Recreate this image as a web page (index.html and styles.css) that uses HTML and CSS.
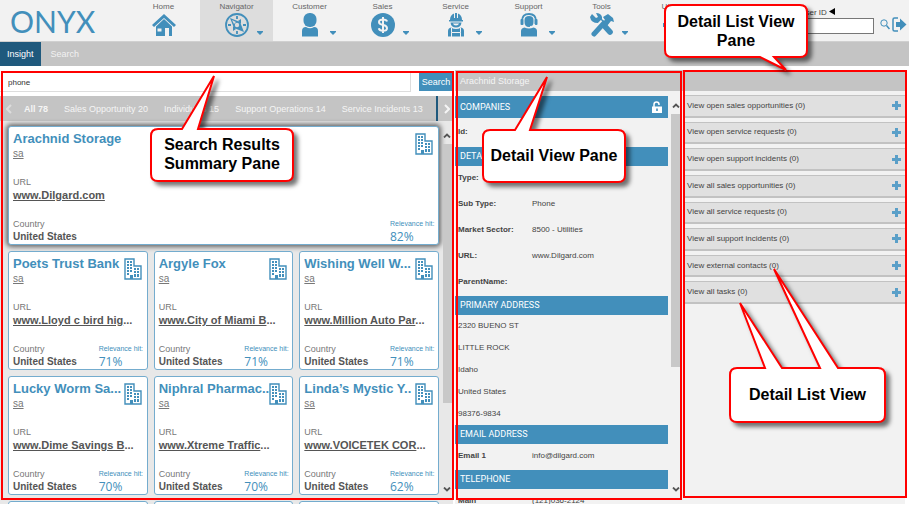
FILE: index.html
```html
<!DOCTYPE html>
<html lang="en">
<head>
<meta charset="utf-8">
<title>Onyx Navigator</title>
<link rel="stylesheet" href="styles.css">
</head>
<body>
<svg class="defs" aria-hidden="true">
  <symbol id="building" viewBox="0 0 18 22">
    <path d="M1 21V1h9v7h7v13Z" fill="#fff" stroke="currentColor" stroke-width="1.4"/>
    <path d="M3 3h2v2H3zm3 0h2v2H6zM3 6h2v2H3zm3 0h2v2H6zM3 9h2v2H3zm3 0h2v2H6zM3 12h2v2H3zm3 0h2v2H6zM10 10h2v2h-2zm3 0h2v2h-2zm-3 3h2v2h-2zm3 0h2v2h-2zM3 15h2v2H3zM6 17h3v4H6zM10 16h2v3h-2zm3 0h2v3h-2z" fill="currentColor"/>
  </symbol>
  <symbol id="caret" viewBox="0 0 6 4"><path d="M0 0h6v1L3 4 0 1Z" fill="currentColor"/></symbol>
  <symbol id="plus" viewBox="0 0 9 9"><path d="M3 0h3v3h3v3H6v3H3V6H0V3h3Z" fill="currentColor"/></symbol>
  <symbol id="up" viewBox="0 0 8 5"><path d="M1 4.500 4 1.500l3 3" fill="none" stroke="#555" stroke-width="1.800"/></symbol>
  <symbol id="down" viewBox="0 0 8 5"><path d="M1 .500 4 3.500l3-3" fill="none" stroke="#555" stroke-width="1.800"/></symbol>
</svg>

<header class="top">
  <a class="logo" href="#">ONYX</a>
  <nav class="modules">
    <a href="#"><span>Home</span>
      <svg class="glyph" viewBox="0 0 24 24"><path d="M0 12 12 1l12 11-2 2L12 5 2 14Z"/><path d="M4 13.500 12 6l8 7.500V23h-3v-8h-4v8H4Z"/><path d="M5.500 15.500h4v3h-4z" fill="#f2f2f2"/></svg></a>
    <a href="#" class="current"><span>Navigator</span>
      <svg class="glyph" viewBox="0 0 24 24"><circle cx="12" cy="12" r="11" fill="none" stroke="currentColor" stroke-width="1.800"/><path d="M12 3v3M12 18v3M3 12h3M18 12h3" stroke="currentColor" stroke-width="1.800"/><path d="M5 5l10 4 4 10-10-4Z"/><path d="m16 6-3 2 3 3ZM8 18l3-2-3-3Z"/><circle cx="12" cy="12" r="2.200" fill="#ddd"/><path d="m7 7 4 2-2 2Z" fill="#ddd"/></svg>
      <svg class="caret"><use href="#caret"/></svg></a>
    <a href="#"><span>Customer</span>
      <svg class="glyph" viewBox="0 0 24 24"><rect x="5.500" y="0" width="13" height="14" rx="6"/><path d="M4 23.500V18q0-4 4-4 4 2.500 8 0 4 0 4 4v5.500Z"/></svg>
      <svg class="caret"><use href="#caret"/></svg></a>
    <a href="#"><span>Sales</span>
      <svg class="glyph" viewBox="0 0 24 24"><circle cx="12" cy="12" r="12"/><path d="M16 8.500Q15.500 6.500 12 6.500 8 6.500 8 9q0 2.200 4 3 4 .800 4 3.200 0 2.500-4 2.500-3.700 0-4.200-2.400M12 4v16" fill="none" stroke="#f2f2f2" stroke-width="2"/></svg>
      <svg class="caret"><use href="#caret"/></svg></a>
    <a href="#"><span>Service</span>
      <svg class="glyph" viewBox="0 0 24 24"><path d="M6 7q0-5 4-6.500V5h1V0h2v5h1V.500Q18 2 18 7h1v1.500H5V7Z"/><path d="M6.500 9.500h11q-.500 5-5.500 5t-5.500-5Z"/><path d="M9 10.500h6q-.500 2-3 2t-3-2Z" fill="#f2f2f2"/><path d="M4 23.500V18q0-3 3-3.500 5 3 10 0 3 .500 3 3.500v5.500Z"/><path d="M7.500 15v4.500h9V15M7.500 19.500V24M16.500 19.500V24" fill="none" stroke="#f2f2f2"/></svg>
      <svg class="caret"><use href="#caret"/></svg></a>
    <a href="#"><span>Support</span>
      <svg class="glyph" viewBox="0 0 24 24"><path d="M5 8q0-7 7-7t7 7" fill="none" stroke="currentColor" stroke-width="1.800"/><rect x="3.500" y="6" width="3" height="6" rx="1"/><rect x="17.500" y="6" width="3" height="6" rx="1"/><path d="M7.500 7q0-4 4.500-4t4.500 4v2q0 5-4.500 5T7.500 9Z"/><path d="M18 11q-1 3-5 2.500" fill="none" stroke="#f2f2f2"/><path d="M4 23.500V18q0-3 3.500-3.500 4.500 2 9 0Q20 15 20 18v5.500Z"/></svg>
      <svg class="caret"><use href="#caret"/></svg></a>
    <a href="#"><span>Tools</span>
      <svg class="glyph" viewBox="0 0 24 24"><path d="M2 1l4 4 2-1-2-4q5 0 6 4v2l10 11q2 2 0 4t-4 0L8 10Q1 10 0 4Z"/><path d="M3 19 13 9" stroke="#f2f2f2" stroke-width="6"/><path d="m4 21 10-11" stroke="currentColor" stroke-width="5" stroke-linecap="round"/><path d="M13 4l5-3 5 4 1 4-3-1-4 5-4-3 2-3Z"/></svg>
      <svg class="caret"><use href="#caret"/></svg></a>
    <a href="#"><span>Utilities</span>
      <svg class="glyph" viewBox="0 0 24 24"><circle cx="12" cy="12" r="6" fill="none" stroke="currentColor" stroke-width="5"/><path d="M12 0v5M12 19v5M0 12h5M19 12h5M4 4l3 3M17 17l3 3M4 20l3-3M17 7l3-3" stroke="currentColor" stroke-width="4"/></svg></a>
    <a href="#"><span>Analytics</span></a>
  </nav>
  <form class="lookup">
    <label for="userid">User ID <svg viewBox="0 0 6 7" width="6" height="7"><path d="M6 0v7L0 3.500Z" fill="#000"/></svg></label>
    <input id="userid" type="text">
  </form>
  <div class="actions">
    <button type="button" aria-label="Find"><svg viewBox="0 0 10 11" width="10" height="11"><circle cx="4" cy="4" r="3.200" fill="none" stroke="currentColor"/><path d="m6.500 6.500 3 3.500" stroke="currentColor" stroke-width="1.500"/></svg></button>
    <button type="button" aria-label="Log out"><svg viewBox="0 0 15 15" width="15" height="15"><path d="M6 1H2.500Q1 1 1 2.500v10Q1 14 2.500 14H6" fill="none" stroke="currentColor" stroke-width="1.500"/><path d="M4 5h4V1.500L14.500 7.500 8 13.500V10H4Z" fill="currentColor"/></svg></button>
  </div>
</header>

<nav class="tabs"><a href="#" class="active">Insight</a><a href="#">Search</a></nav>

<main class="panes">
  <section class="pane results">
    <div class="clip">
      <form class="search">
        <input type="text" value="phone" aria-label="Search text">
        <button type="button">Search</button>
      </form>
      <nav class="filters">
        <svg class="arrow faint" viewBox="0 0 6 10"><path d="M5 1 1 5l4 4" fill="none" stroke="currentColor" stroke-width="2"/></svg>
        <div class="filter-list">
          <a href="#" class="all">All 78</a><a href="#">Sales Opportunity 20</a><a href="#">Individuals 15</a><a href="#">Support Operations 14</a><a href="#">Service Incidents 13</a>
        </div>
        <div class="next"><svg class="arrow" viewBox="0 0 6 10"><path d="m1 1 4 4-4 4" fill="none" stroke="currentColor" stroke-width="2"/></svg></div>
      </nav>
      <div class="scroller">
        <div class="cards">
          <article class="card selected"><svg class="bld"><use href="#building"/></svg><h2>Arachnid Storage</h2><a class="sa" href="#">sa</a><p class="cap">URL</p><p class="url"><a href="#">www.Dilgard.com</a></p><div class="foot"><p class="country"><span>Country</span><b>United States</b></p><p class="hit"><span>Relevance hit:</span><b>82%</b></p></div></article>
          <article class="card"><svg class="bld"><use href="#building"/></svg><h2>Poets Trust Bank</h2><a class="sa" href="#">sa</a><p class="cap">URL</p><p class="url"><a href="#">www.Lloyd c bird hig</a>...</p><div class="foot"><p class="country"><span>Country</span><b>United States</b></p><p class="hit"><span>Relevance hit:</span><b>71%</b></p></div></article>
          <article class="card"><svg class="bld"><use href="#building"/></svg><h2>Argyle Fox</h2><a class="sa" href="#">sa</a><p class="cap">URL</p><p class="url"><a href="#">www.City of Miami B</a>...</p><div class="foot"><p class="country"><span>Country</span><b>United States</b></p><p class="hit"><span>Relevance hit:</span><b>71%</b></p></div></article>
          <article class="card"><svg class="bld"><use href="#building"/></svg><h2>Wishing Well W...</h2><a class="sa" href="#">sa</a><p class="cap">URL</p><p class="url"><a href="#">www.Million Auto Par</a>...</p><div class="foot"><p class="country"><span>Country</span><b>United States</b></p><p class="hit"><span>Relevance hit:</span><b>71%</b></p></div></article>
          <article class="card"><svg class="bld"><use href="#building"/></svg><h2>Lucky Worm Sa...</h2><a class="sa" href="#">sa</a><p class="cap">URL</p><p class="url"><a href="#">www.Dime Savings B</a>...</p><div class="foot"><p class="country"><span>Country</span><b>United States</b></p><p class="hit"><span>Relevance hit:</span><b>70%</b></p></div></article>
          <article class="card"><svg class="bld"><use href="#building"/></svg><h2>Niphral Pharmac..</h2><a class="sa" href="#">sa</a><p class="cap">URL</p><p class="url"><a href="#">www.Xtreme Traffic</a>...</p><div class="foot"><p class="country"><span>Country</span><b>United States</b></p><p class="hit"><span>Relevance hit:</span><b>70%</b></p></div></article>
          <article class="card"><svg class="bld"><use href="#building"/></svg><h2>Linda’s Mystic Y..</h2><a class="sa" href="#">sa</a><p class="cap">URL</p><p class="url"><a href="#">www.VOICETEK COR</a>...</p><div class="foot"><p class="country"><span>Country</span><b>United States</b></p><p class="hit"><span>Relevance hit:</span><b>62%</b></p></div></article>
          <article class="card"></article><article class="card"></article><article class="card"></article>
        </div>
        <div class="bar"><svg><use href="#up"/></svg><div class="track"><i class="thumb"></i></div><svg><use href="#down"/></svg></div>
      </div>
    </div>
    <div class="frame"></div>
    <div class="callout c-results">
      <svg><path d="M7 54h24L63 1 47 54h88q7 0 7 7v38q0 7-7 7H7q-7 0-7-7V61q0-7 7-7Z"/></svg>
      <p>Search Results<br>Summary Pane</p>
    </div>
  </section>

  <section class="pane detail">
    <div class="clip">
      <h1 class="title">Arachnid Storage</h1>
      <div class="scroller">
        <div class="fields">
          <h3 class="first">COMPANIES <svg viewBox="0 0 12 12" width="12" height="12"><path d="M3 6V3.500Q3 1 5.500 1T8 3.500V4" fill="none" stroke="#fff" stroke-width="1.500"/><path d="M1 5.500h10V12H1Z" fill="#fff"/><path d="M5.200 7.500h1.600v2.500H5.200Z" fill="#428fbb"/></svg></h3>
          <dl class="id"><dt>Id:</dt><dd>59</dd></dl>
          <h3>DETAILS</h3>
          <dl><dt>Type:</dt><dd></dd><dt>Sub Type:</dt><dd>Phone</dd><dt>Market Sector:</dt><dd>8500 - Utilities</dd><dt>URL:</dt><dd>www.Dilgard.com</dd><dt>ParentName:</dt><dd></dd></dl>
          <h3>PRIMARY ADDRESS</h3>
          <address><span>2320 BUENO ST</span><span>LITTLE ROCK</span><span>Idaho</span><span>United States</span><span>98376-9834</span></address>
          <h3>EMAIL ADDRESS</h3>
          <dl><dt>Email 1</dt><dd>info@dilgard.com</dd></dl>
          <h3>TELEPHONE</h3>
          <dl><dt>Main</dt><dd>(121)036-2124</dd></dl>
        </div>
        <div class="bar"><svg><use href="#up"/></svg><div class="track"><i class="thumb"></i></div><svg><use href="#down"/></svg></div>
      </div>
    </div>
    <div class="frame"></div>
    <div class="callout c-detail">
      <svg><path d="M7 54h25L64 1 47 54h88q7 0 7 7v38q0 7-7 7H7q-7 0-7-7V61q0-7 7-7Z"/></svg>
      <p>Detail View Pane</p>
    </div>
  </section>

  <section class="pane lists">
    <div class="clip">
      <div class="title"></div>
      <ul>
        <li><button type="button">View open sales opportunities (0)<svg><use href="#plus"/></svg></button></li>
        <li><button type="button">View open service requests (0)<svg><use href="#plus"/></svg></button></li>
        <li><button type="button">View open support incidents (0)<svg><use href="#plus"/></svg></button></li>
        <li><button type="button">View all sales opportunities (0)<svg><use href="#plus"/></svg></button></li>
        <li><button type="button">View all service requests (0)<svg><use href="#plus"/></svg></button></li>
        <li><button type="button">View all support incidents (0)<svg><use href="#plus"/></svg></button></li>
        <li><button type="button">View external contacts (0)<svg><use href="#plus"/></svg></button></li>
        <li><button type="button">View all tasks (0)<svg><use href="#plus"/></svg></button></li>
      </ul>
    </div>
    <div class="frame"></div>
    <div class="callout c-pane">
      <svg><path d="M7 0h128q7 0 7 7v38q0 7-7 7h-26l12 13L95 52H7q-7 0-7-7V7q0-7 7-7Z"/></svg>
      <p>Detail List View<br>Pane</p>
    </div>
    <div class="callout c-list">
      <svg><path d="M7 100h28L10 35l42 65h38L44 1l64 99h40q7 0 7 7v40q0 7-7 7H7q-7 0-7-7v-40q0-7 7-7Z"/></svg>
      <p>Detail List View</p>
    </div>
  </section>
</main>
</body>
</html>
```

FILE: styles.css
```css
* { box-sizing: border-box; }
body {
  margin: 0;
  height: 100vh;
  display: flex;
  flex-direction: column;
  overflow: hidden;
  padding-bottom: 2px;
  background: #fff;
  color: #444;
  font: 9px/12px "Liberation Sans", Arial, sans-serif;
}
h1, h2, h3, p, ul, dl, dd { margin: 0; padding: 0; }
a { color: inherit; text-decoration: none; }
button { border: 0; padding: 0; background: none; font: inherit; color: inherit; }
.defs { display: none; }

/* header */
.top {
  display: flex;
  height: 42px;
  padding-left: 10px;
  background: #f2f2f2;
  border-bottom: 1px solid #d0d0d0;
}
.logo {
  width: 117px;
  color: #428fbb;
  font: 400 30px/42px Lato, "DejaVu Sans", sans-serif;
}
.modules { flex: 1; display: grid; grid-template-columns: repeat(9, 1fr); }
.modules a {
  position: relative;
  display: flex;
  flex-direction: column;
  align-items: center;
  padding-top: 1px;
  font-size: 8px;
  color: #666;
}
.modules .current { background: #ddd; }
.glyph { width: 24px; height: 24px; fill: currentColor; color: #428fbb; }
.caret { position: absolute; right: 10px; top: 31px; width: 6px; height: 4px; color: #428fbb; }
.lookup { width: 90px; display: flex; flex-direction: column; padding-top: 7px; }
.lookup label { font-size: 8px; line-height: 11px; text-align: right; padding-right: 39px; color: #444; white-space: nowrap; }
.lookup input { width: 100%; height: 16px; border: 1px solid #777; background: #fff; padding: 0 2px; font: inherit; }
.actions { display: flex; align-items: center; gap: 2px; padding: 8px 2px 0 6px; color: #428fbb; }
.actions svg { display: block; }

.tabs { display: flex; height: 24px; margin-bottom: 4px; background: #c4c4c4; color: #f2f2f2; line-height: 24px; }
.tabs a { padding: 0 10px; }
.tabs .active { padding: 0 7px; background: #1f597d; color: #fff; }

/* panes */
.panes { flex: 1; min-height: 0; display: grid; grid-template-columns: 455fr 228fr 222fr; padding-right: 4px; }
.pane { position: relative; min-width: 0; min-height: 0; }
.clip { height: 100%; overflow: hidden; display: flex; flex-direction: column; background: #f2f2f2; }
.frame { position: absolute; inset: 1px 1px 4px 1px; border: 2px solid #f00; pointer-events: none; }
.lists .frame { inset: 0 -2px 6px 0; }
.title { height: 21px; flex: none; padding-left: 5px; background: #c4c4c4; color: #f5f5f5; font-size: 9px; font-weight: 400; line-height: 22px; }
.scroller { flex: 1; min-height: 0; display: flex; }
.bar { display: flex; flex-direction: column; align-items: center; width: 12px; padding: 12px 0; }
.bar svg { width: 8px; height: 5px; flex: none; }
.track { flex: 1; width: 9px; padding: 6px 0; }
.thumb { display: block; background: #c8c8c8; width: 100%; }

/* search results */
.results { padding-right: 2px; }
.search { display: flex; gap: 8px; height: 26px; flex: none; padding-top: 2px; background: #fff; }
.search input { flex: 1; min-width: 0; height: 20px; border: solid #ddd; border-width: 0 1px 1px 0; padding: 2px 8px 0; font: 8px/12px "Liberation Sans", Arial, sans-serif; color: #333; background: #fff; }
.search button { width: 34px; height: 19px; background: #428fbb; color: #fff; }
.filters { display: flex; align-items: center; height: 25px; flex: none; background: #c4c4c4; color: #f5f5f5; white-space: nowrap; }
.filter-list { flex: 1; display: flex; gap: 16px; padding-left: 12px; }
.filter-list .all { font-weight: 700; }
.arrow { width: 6px; height: 10px; margin-left: 6px; }
.faint { color: #ddd; }
.next { width: 17px; height: 25px; display: flex; align-items: center; border-left: 2px solid #1f597d; }
.results .scroller { background: #e8e8e8; }
.cards { flex: 1; display: grid; grid-template-columns: repeat(3, 1fr); grid-auto-rows: 119px; gap: 6px; padding: 5px 2px 0 8px; }
.card { min-width: 0; background: #fff; border: 1px solid #74acce; border-radius: 3px; padding: 4px; color: #777; white-space: nowrap; }
.selected { grid-column: 1 / -1; box-shadow: 0 0 5px 2px #666; }
.bld { float: right; width: 18px; height: 22px; margin: 2px 1px 0 0; color: #428fbb; }
.card h2 { color: #428fbb; font-size: 13px; line-height: 16px; }
.sa { display: block; width: max-content; font-size: 10px; line-height: 14px; text-decoration: underline; }
.cap { margin-top: 15px; line-height: 12px; }
.url { font-size: 11px; font-weight: 700; line-height: 14px; color: #555; }
.url a { text-decoration: underline; }
.foot { display: flex; justify-content: space-between; margin-top: 16px; }
.foot p { display: flex; flex-direction: column; line-height: 12px; }
.foot .country b { font-size: 10px; line-height: 14px; color: #555; }
.foot .hit { width: 48px; margin-right: -4px; color: #428fbb; font-size: 7px; }
.hit b { font: 400 12px/14px "Liberation Sans Narrow", "Open Sans", sans-serif; }
.results .thumb { height: 77%; }

/* detail */
.fields { flex: 1; overflow: hidden; padding-top: 5px; }
.detail .bar { width: 15px; }
.detail .thumb { height: 69%; }
.fields h3 { height: 19px; padding: 0 5px; display: flex; align-items: center; justify-content: space-between; background: #428fbb; color: #fff; font: 9px/19px Roboto, sans-serif; }
.fields h3.first { height: 22px; }
.fields dl { display: grid; grid-template-columns: 74px 1fr; grid-auto-rows: 26px; padding-left: 3px; font-size: 8px; line-height: 24px; }
.fields .id { grid-auto-rows: 29px; line-height: 28px; }
.fields dt { font-weight: 700; }
.id dd { color: #428fbb; }
address { display: flex; flex-direction: column; padding-left: 3px; font-style: normal; font-size: 8px; line-height: 22px; }

/* lists */
.lists ul { list-style: none; display: flex; flex-direction: column; gap: 4px; height: 209px; margin-top: 4px; }
.lists li { flex: 1; }
.lists button { display: flex; align-items: center; justify-content: space-between; width: 100%; height: 100%; padding: 0 4px; background: #e0e0e0; border: solid #c2c2c2; border-width: 1px 0 2px; font-size: 8px; color: #444; }
.lists button svg { width: 9px; height: 9px; color: #5a9fc8; }

/* callouts */
.callout { position: absolute; z-index: 2; width: 142px; height: 106px; }
.callout svg { position: absolute; inset: 0; width: 100%; height: 100%; overflow: visible; fill: #fff; stroke: #f00; stroke-width: 2; filter: drop-shadow(4px 4px 2px #0008); }
.callout p { position: absolute; inset: 52px 0 0; display: flex; align-items: center; justify-content: center; color: #000; font-size: 16px; font-weight: 700; line-height: 19px; white-space: nowrap; }
.c-results { left: 151px; top: 5px; }
.c-detail { left: 28px; top: 6px; }
.c-pane { right: 98px; top: -65px; height: 52px; }
.c-pane p { inset: 0; text-align: center; }
.c-list { right: 20px; top: 198px; width: 155px; height: 154px; }
.c-list p { inset: 98px 0 0; }
```
